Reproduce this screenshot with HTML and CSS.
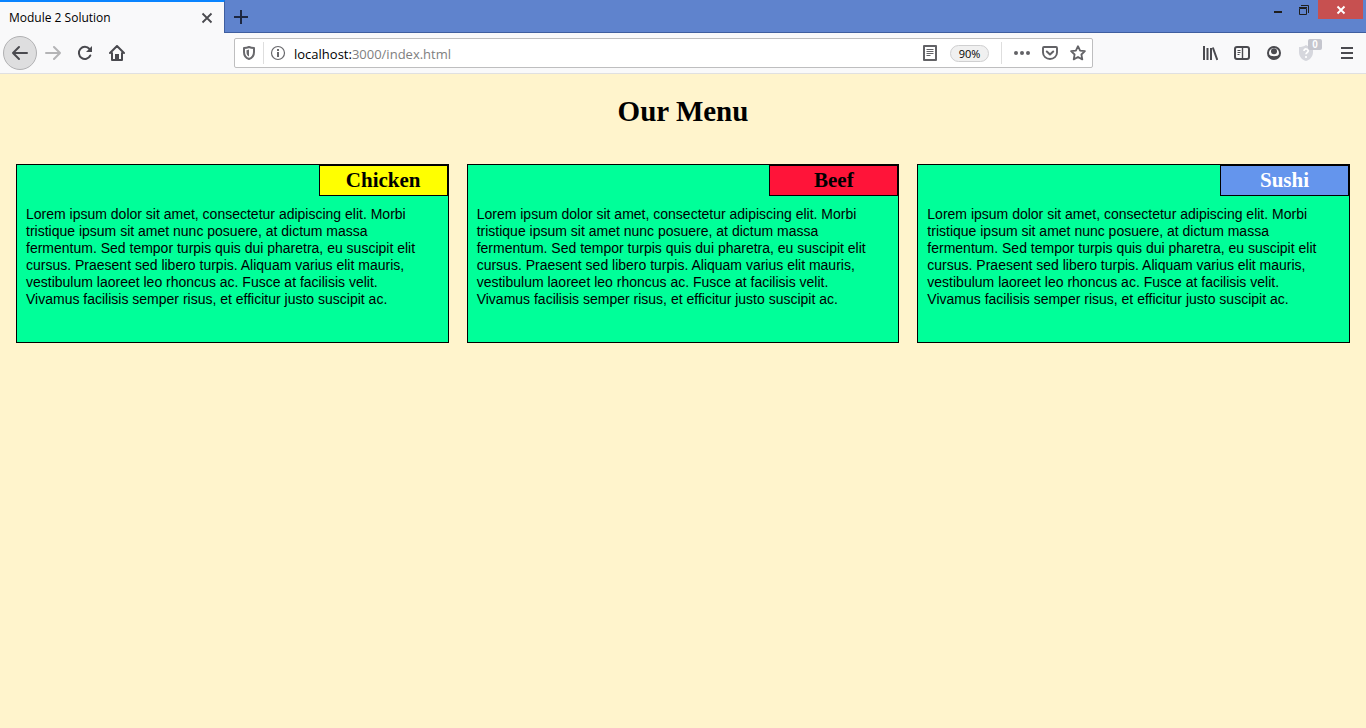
FILE: index.html
```html
<!DOCTYPE html>
<html lang="en">
<head>
<meta charset="utf-8">
<title>Module 2 Solution</title>
<link rel="stylesheet" href="styles.css">
</head>
<body>
<header class="browser">
  <div class="titlebar">
    <div class="tab">
      <span class="tab-title">Module 2 Solution</span>
      <button class="icon-btn" aria-label="Close tab"><svg width="16" height="16" viewBox="0 0 16 16" fill="none" stroke="#4a4a4f" stroke-width="1.8"><path d="M3.500 3.500l9 9M12.500 3.500l-9 9"/></svg></button>
    </div>
    <button class="icon-btn new-tab" aria-label="New tab"><svg width="16" height="16" viewBox="0 0 16 16" fill="none" stroke="#1d2740" stroke-width="2"><path d="M8 1v14M1 8h14"/></svg></button>
    <div class="window-controls">
      <button class="win-btn" aria-label="Minimize"><svg width="10" height="10" viewBox="0 0 10 10"><path d="M1 6h8v2H1z" fill="#1e1e1e"/></svg></button>
      <button class="win-btn" aria-label="Restore"><svg width="10" height="10" viewBox="0 0 10 10" fill="none" stroke="#1e1e1e"><path d="M2 .5h7.500V8"/><path d="M.5 3.500h7v6h-7zM0 2.500h8"/></svg></button>
      <button class="win-btn win-close" aria-label="Close"><svg width="10" height="10" viewBox="0 0 10 10" fill="none" stroke="#fff" stroke-width="1.900"><path d="M1.500 1.500l7 7M8.500 1.500l-7 7"/></svg></button>
    </div>
  </div>
  <div class="toolbar">
    <nav class="nav-buttons">
      <button class="icon-btn back" aria-label="Back"><svg width="18" height="16" viewBox="0 0 18 16" fill="none" stroke="#4a4a4f" stroke-width="2" stroke-linecap="round" stroke-linejoin="round"><path d="M16 8H2M8 2L2 8l6 6"/></svg></button>
      <button class="icon-btn" aria-label="Forward"><svg width="16" height="16" viewBox="0 0 16 16" fill="none" stroke="#b4b4b6" stroke-width="2" stroke-linecap="round" stroke-linejoin="round"><path d="M1 8h14M9 2l6 6-6 6"/></svg></button>
      <button class="icon-btn" aria-label="Reload"><svg width="16" height="16" viewBox="0 0 16 16" fill="none" stroke="#4a4a4f" stroke-width="2" stroke-linecap="round"><path d="M12.500 4A6 6 0 1 0 13.300 10.500"/><path d="M15 1v6H9z" fill="#4a4a4f" stroke="none"/></svg></button>
      <button class="icon-btn" aria-label="Home"><svg width="16" height="16" viewBox="0 0 16 16" fill="none" stroke="#4a4a4f" stroke-width="2" stroke-linecap="round" stroke-linejoin="round"><path d="M1 8l7-7 7 7M3 8v7h10V8"/><path d="M6 15V9h4v6z" fill="#4a4a4f" stroke="none"/></svg></button>
    </nav>
    <div class="urlbar">
      <button class="icon-btn" aria-label="Tracking protection"><svg width="14" height="16" viewBox="0 0 14 16" fill="none" stroke="#68686c" stroke-width="2"><path d="M7 2C5.200 2.800 3.500 3 2 3v4c0 3.500 2 6 5 7 3-1 5-3.500 5-7V3C10.500 3 8.800 2.800 7 2z" stroke-linejoin="round"/><path d="M7 4.500v7C5.200 10.500 4.500 9 4.500 7V5.200C5.300 5.100 6.200 4.900 7 4.500z" fill="#68686c" stroke="none"/></svg></button>
      <span class="divider"></span>
      <button class="icon-btn" aria-label="Site information"><svg width="16" height="16" viewBox="0 0 16 16" fill="none" stroke="#68686c" stroke-width="1.200"><circle cx="8" cy="8" r="6.500"/><path d="M8 4v2M8 7v5" stroke-width="2"/></svg></button>
      <a class="url" href="#menu">localhost:<span class="url-path">3000/index.html</span></a>
      <div class="url-actions">
        <button class="icon-btn" aria-label="Reader view"><svg width="16" height="16" viewBox="0 0 16 16" fill="none" stroke="#626266"><path d="M2 1h12v14H2z" stroke-width="2" stroke-linejoin="round"/><path d="M4.500 4.500h7M4.500 6.500h7M4.500 8.500h7M4.500 10.500h4"/></svg></button>
        <button class="zoom-level">90%</button>
        <span class="divider"></span>
        <button class="icon-btn" aria-label="Page actions"><svg width="16" height="16" viewBox="0 0 16 16" fill="#626266"><circle cx="2" cy="8" r="2"/><circle cx="8" cy="8" r="2"/><circle cx="14" cy="8" r="2"/></svg></button>
        <button class="icon-btn" aria-label="Save to Pocket"><svg width="16" height="16" viewBox="0 0 16 16" fill="none" stroke="#626266" stroke-width="2" stroke-linecap="round" stroke-linejoin="round"><path d="M2 2h12a1 1 0 0 1 1 1v4.500a7 6.500 0 0 1-14 0V3a1 1 0 0 1 1-1z" stroke-width="1.900"/><path d="M4.800 6.500L8 9.500l3.200-3"/></svg></button>
        <button class="icon-btn" aria-label="Bookmark"><svg width="16" height="16" viewBox="0 0 16 16" fill="none" stroke="#626266" stroke-width="1.800" stroke-linejoin="round"><path d="M8 1.200l2.100 4.400 4.800.6-3.500 3.300.9 4.900L8 12l-4.300 2.400.9-4.900L1.100 6.200l4.800-.6z"/></svg></button>
      </div>
    </div>
    <div class="tools">
      <button class="icon-btn" aria-label="Library"><svg width="16" height="16" viewBox="0 0 16 16" fill="none" stroke="#4a4a4f" stroke-width="2"><path d="M2 1v14M5.500 3v12M9 3v12M10.800 2.500L15.300 15"/></svg></button>
      <button class="icon-btn" aria-label="Sidebars"><svg width="16" height="16" viewBox="0 0 16 16" fill="none" stroke="#4a4a4f"><rect x="1" y="2" width="14" height="12" rx="2" stroke-width="2"/><path d="M8.500 2v12" stroke-width="1.400"/><path d="M3.500 5.500h3M3.500 7.500h3M3.500 9.500h2"/></svg></button>
      <button class="icon-btn" aria-label="Account"><svg width="16" height="16" viewBox="0 0 16 16" fill="none" stroke="#4a4a4f"><circle cx="8" cy="8" r="6" stroke-width="2"/><circle cx="8" cy="6.300" r="3" fill="#4a4a4f" stroke="none"/><path d="M2.500 9.200c1.200 1 2.500 2 5.500 2s4.300-1 5.500-2C13 13 11 14 8 14s-5-1-5.500-4.800z" fill="#4a4a4f" stroke="none"/></svg></button>
      <button class="icon-btn shield" aria-label="Protection, 0 items"><svg width="16" height="16" viewBox="0 0 16 16" fill="none"><path d="M8 0c-2 1.500-4.500 2-7 2v5c0 4.500 3 8 7 9 4-1 7-4.500 7-9V2c-2.500 0-5-.5-7-2z" fill="#d6d7dd"/><path d="M6 6c0-2.800 4.200-2.600 4.200 0C10.200 7.500 8 7.500 8 9.300M8 11v2" stroke="#fff" stroke-width="1.700"/></svg><span class="badge">0</span></button>
      <button class="icon-btn app-menu" aria-label="Open menu"><svg width="16" height="16" viewBox="0 0 16 16" stroke="#4a4a4f" stroke-width="2"><path d="M2 3h12M2 8h12M2 13h12"/></svg></button>
    </div>
  </div>
</header>
<main class="page" id="menu">
  <h1 class="page-title">Our Menu</h1>
  <div class="menu-grid">
    <section class="card">
      <h2 class="card-title chicken">Chicken</h2>
      <p class="card-text">Lorem ipsum dolor sit amet, consectetur adipiscing elit. Morbi tristique ipsum sit amet nunc posuere, at dictum massa fermentum. Sed tempor turpis quis dui pharetra, eu suscipit elit cursus. Praesent sed libero turpis. Aliquam varius elit mauris, vestibulum laoreet leo rhoncus ac. Fusce at facilisis velit. Vivamus facilisis semper risus, et efficitur justo suscipit ac.</p>
    </section>
    <section class="card">
      <h2 class="card-title beef">Beef</h2>
      <p class="card-text">Lorem ipsum dolor sit amet, consectetur adipiscing elit. Morbi tristique ipsum sit amet nunc posuere, at dictum massa fermentum. Sed tempor turpis quis dui pharetra, eu suscipit elit cursus. Praesent sed libero turpis. Aliquam varius elit mauris, vestibulum laoreet leo rhoncus ac. Fusce at facilisis velit. Vivamus facilisis semper risus, et efficitur justo suscipit ac.</p>
    </section>
    <section class="card">
      <h2 class="card-title sushi">Sushi</h2>
      <p class="card-text">Lorem ipsum dolor sit amet, consectetur adipiscing elit. Morbi tristique ipsum sit amet nunc posuere, at dictum massa fermentum. Sed tempor turpis quis dui pharetra, eu suscipit elit cursus. Praesent sed libero turpis. Aliquam varius elit mauris, vestibulum laoreet leo rhoncus ac. Fusce at facilisis velit. Vivamus facilisis semper risus, et efficitur justo suscipit ac.</p>
    </section>
  </div>
</main>
</body>
</html>
```
FILE: styles.css
```css
* { box-sizing: border-box; }
body {
  margin: 0;
  min-height: 100vh;
  background: #fff4cc;
  color: #000;
  font-family: "Liberation Sans", Arial, sans-serif;
}
button {
  border: 0;
  padding: 0;
  background: none;
  color: inherit;
}
svg { display: block; }

.browser { font-family: "Noto Sans", "Open Sans", sans-serif; }
.titlebar {
  display: flex;
  height: 33px;
  background: #5f83cd;
  box-shadow: inset 0 -1px #3f5e9f;
}
.tab {
  display: flex;
  align-items: center;
  justify-content: space-between;
  width: 225px;
  padding: 0 9px;
  border-top: 2px solid #0a84ff;
  border-right: 1px solid #3f5e9f;
  background: #f9f9fa;
}
.tab-title { font-family: "Open Sans", "Noto Sans", sans-serif; font-size: 12px; }
.icon-btn {
  display: flex;
  flex: none;
  align-items: center;
  justify-content: center;
}
.new-tab { width: 32px; }
.window-controls {
  display: flex;
  align-items: flex-start;
  margin-left: auto;
  padding-right: 3px;
}
.win-btn {
  display: flex;
  align-items: center;
  justify-content: center;
  width: 26px;
  height: 19px;
}
.win-close { width: 45px; margin-left: 1px; background: #c75050; }

.toolbar {
  display: flex;
  align-items: center;
  height: 41px;
  padding: 0 11px 0 3px;
  border-bottom: 1px solid #e0e0e1;
  background: #f9f9fa;
}
.nav-buttons { display: flex; align-items: center; gap: 16px; }
.back {
  width: 34px;
  height: 34px;
  margin-right: -8px;
  border: 1px solid #b1b1b3;
  border-radius: 50%;
  background: #dededf;
}
.urlbar {
  display: flex;
  align-items: center;
  flex: 1;
  height: 30px;
  margin: 0 109px;
  padding: 0 6px 0 7px;
  border: 1px solid #bebebf;
  border-radius: 2px;
  background: #fff;
}
.divider { width: 1px; height: 22px; margin: 0 6px 0 7px; background: #dedede; }
.url {
  margin-left: 8px;
  padding-top: 2px;
  color: #000;
  font-family: "Open Sans", "Noto Sans", sans-serif;
  font-size: 13px;
  text-decoration: none;
}
.url-path { color: #808080; }
.url-actions { display: flex; align-items: center; gap: 12px; margin-left: auto; }
.url-actions .divider { margin: 0; }
.zoom-level {
  width: 39px;
  height: 17px;
  border: 1px solid #cfcfd0;
  border-radius: 9px;
  background: #f0f0f0;
  font-family: "Open Sans", "Noto Sans", sans-serif;
  font-size: 11px;
  line-height: 15px;
}
.tools { display: flex; align-items: center; gap: 16px; }
.shield { position: relative; margin-right: 9px; }
.badge {
  position: absolute;
  top: -6px;
  left: 10px;
  width: 14px;
  border-radius: 2px;
  background: #c5c6ce;
  color: #fff;
  font-size: 10px;
  font-weight: 700;
  line-height: 11px;
  text-align: center;
}

.page { padding: 20px 16px; }
.page-title {
  margin: 0 0 36px;
  font: 700 29px/34px "Liberation Serif", "Times New Roman", serif;
  text-align: center;
}
.menu-grid {
  display: grid;
  grid-template-columns: repeat(auto-fit, minmax(300px, 1fr));
  gap: 18px;
}
.card {
  display: flex;
  flex-direction: column;
  border: 1px solid #000;
  background: #00ff99;
}
.card-title {
  align-self: flex-end;
  width: 129px;
  margin: 0;
  border: 1px solid #000;
  font: 700 21px/29px "Liberation Serif", Georgia, serif;
  text-align: center;
}
.chicken { background: #ffff00; }
.beef { background: #ff1439; }
.sushi { background: #6495ed; color: #fff; }
.card-text {
  margin: 0;
  padding: 10px 18px 34px 9px;
  font-size: 14px;
  line-height: 17px;
}
```
